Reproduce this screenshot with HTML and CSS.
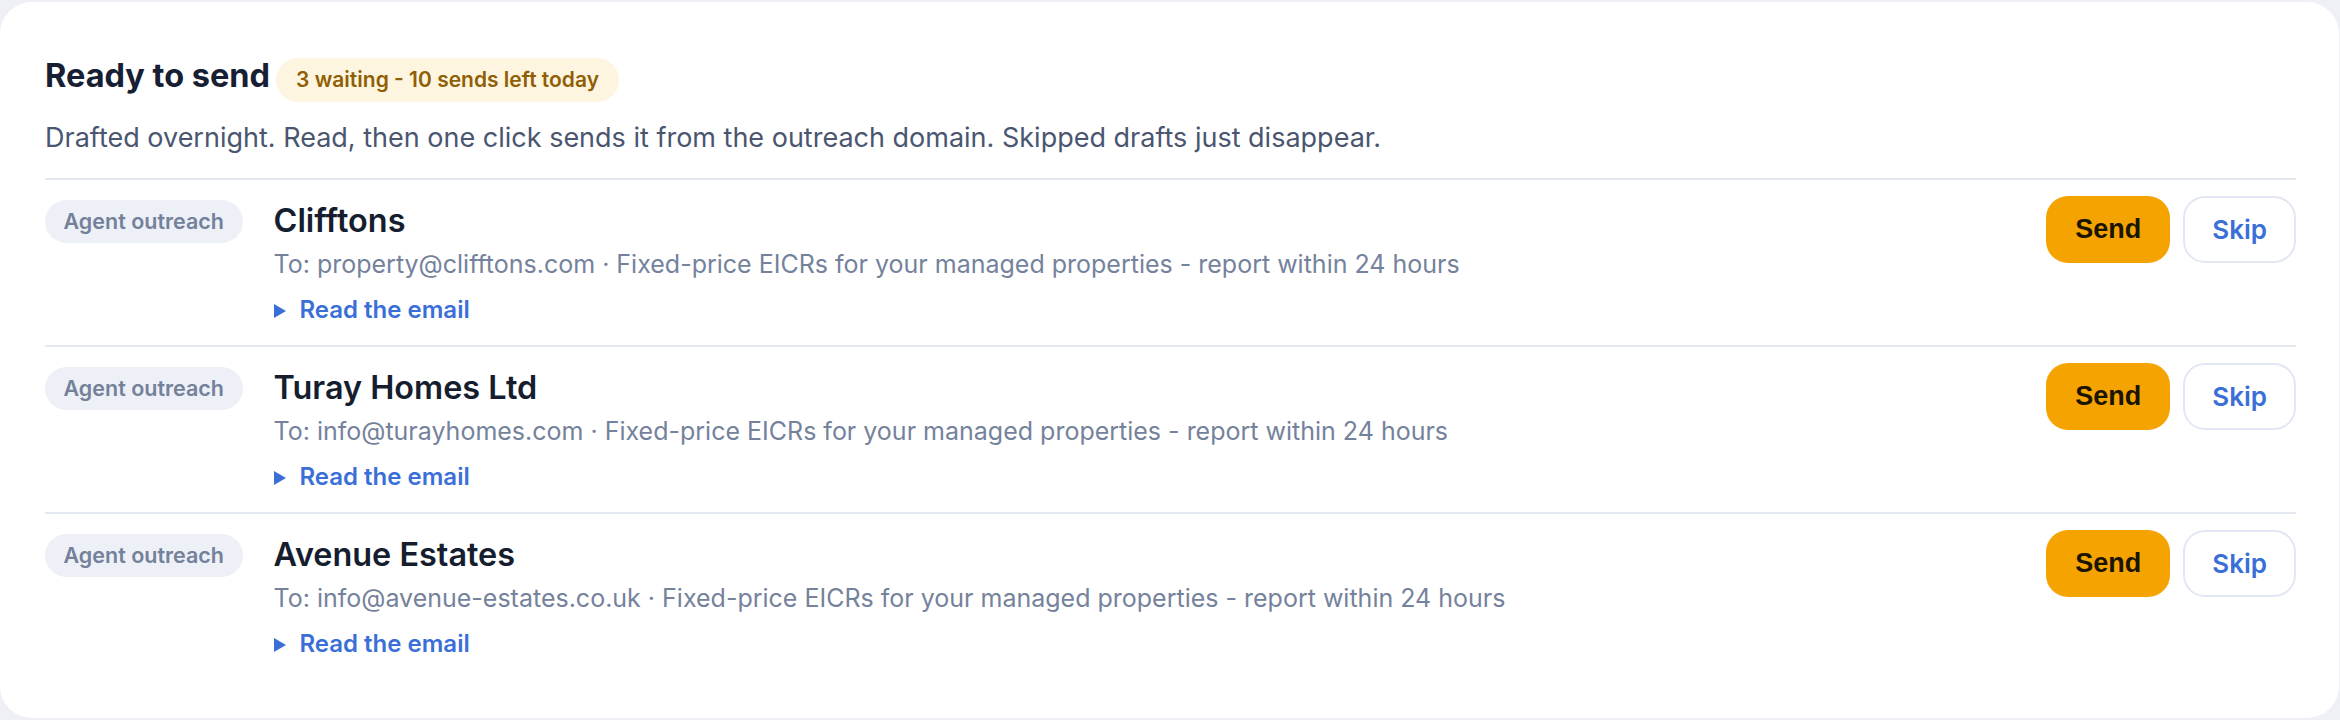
FILE: index.html
```html
<html>
    <head>
        <link rel="stylesheet" href="styles.css">
    </head>
    <body class="page">
        <div class="card">
            <div class="card-head">
                <h2 class="card-title">Ready to send</h2>
                <span class="quota">3 waiting - 10 sends left today</span>
            </div>
            <p class="card-intro">Drafted overnight. Read, then one click sends it from the outreach domain. Skipped drafts just disappear.</p>

            <div class="draft">
                <span class="draft-tag">Agent outreach</span>
                <div class="draft-main">
                    <div class="draft-name">Clifftons</div>
                    <div class="draft-meta">To: property@clifftons.com · Fixed-price EICRs for your managed properties - report within 24 hours</div>
                    <details class="draft-body">
                        <summary>Read the email</summary>
                    </details>
                </div>
                <div class="draft-actions">
                    <button class="btn-send">Send</button>
                    <button class="btn-skip">Skip</button>
                </div>
            </div>

            <div class="draft">
                <span class="draft-tag">Agent outreach</span>
                <div class="draft-main">
                    <div class="draft-name">Turay Homes Ltd</div>
                    <div class="draft-meta">To: info@turayhomes.com · Fixed-price EICRs for your managed properties - report within 24 hours</div>
                    <details class="draft-body">
                        <summary>Read the email</summary>
                    </details>
                </div>
                <div class="draft-actions">
                    <button class="btn-send">Send</button>
                    <button class="btn-skip">Skip</button>
                </div>
            </div>

            <div class="draft">
                <span class="draft-tag">Agent outreach</span>
                <div class="draft-main">
                    <div class="draft-name">Avenue Estates</div>
                    <div class="draft-meta">To: info@avenue-estates.co.uk · Fixed-price EICRs for your managed properties - report within 24 hours</div>
                    <details class="draft-body">
                        <summary>Read the email</summary>
                    </details>
                </div>
                <div class="draft-actions">
                    <button class="btn-send">Send</button>
                    <button class="btn-skip">Skip</button>
                </div>
            </div>
        </div>
    </body>
</html>
```

FILE: styles.css
```css
.page {
    margin: 0;
    background-color: #eef0f6;
    font-family: Inter, "Noto Sans", sans-serif;
}
.card {
    box-sizing: border-box;
    height: 716px;
    margin: 2px 1px 2px 0;
    padding: 54px 43px 0 45px;
    background-color: #ffffff;
    border-radius: 32px;
}
.card-head {
    display: flex;
    align-items: baseline;
    gap: 6px;
}
.card-title {
    margin: 0;
    font-size: 32.5px;
    line-height: 40px;
    font-weight: 700;
    color: #172033;
}
.quota {
    height: 44px;
    line-height: 44px;
    padding: 0 20px;
    border-radius: 22px;
    background-color: #fef5e1;
    color: #8f5f05;
    font-size: 21px;
    font-weight: 600;
}
.card-intro {
    margin: 18px 0 22px 0;
    font-size: 27px;
    line-height: 36px;
    color: #4a5670;
}

.draft {
    display: flex;
    align-items: flex-start;
    border-top: 2px solid #e4e8f1;
    padding: 16px 0 19px 0;
}
.draft-tag {
    flex: 0 0 auto;
    margin-top: 4px;
    margin-right: 31px;
    height: 43px;
    line-height: 43px;
    padding: 0 18.5px;
    border-radius: 22px;
    background-color: #edf0f7;
    color: #74819a;
    font-size: 21.5px;
    font-weight: 600;
}
.draft-main {
    flex: 1;
    margin-top: 6px;
}
.draft-name {
    font-size: 32.4px;
    line-height: 38px;
    font-weight: 600;
    color: #151d2e;
}
.draft-meta {
    margin-top: 8px;
    font-size: 25px;
    line-height: 32px;
    color: #75829b;
}
.draft-body {
    margin-top: 14px;
}
.draft-body summary {
    list-style: none;
    cursor: pointer;
    font-size: 24px;
    line-height: 32px;
    font-weight: 600;
    color: #3a6fd8;
}
.draft-body summary::-webkit-details-marker {
    display: none;
}
.draft-body summary::before {
    content: "";
    display: inline-block;
    width: 0;
    height: 0;
    margin-right: 14px;
    border-top: 7px solid transparent;
    border-bottom: 7px solid transparent;
    border-left: 12px solid #3a6fd8;
}
.draft-actions {
    display: flex;
    gap: 13px;
}
.btn-send {
    height: 67px;
    padding: 0 29px;
    border: none;
    border-radius: 22px;
    background-color: #f4a300;
    color: #1a1400;
    font-family: "Liberation Sans", Arial, sans-serif;
    font-size: 27px;
    font-weight: 700;
}
.btn-skip {
    height: 67px;
    padding: 0 27px;
    border: 2px solid #e2e7f3;
    border-radius: 22px;
    background-color: #ffffff;
    color: #3a6fd8;
    font-family: Inter, sans-serif;
    font-size: 26px;
    font-weight: 600;
}
```
